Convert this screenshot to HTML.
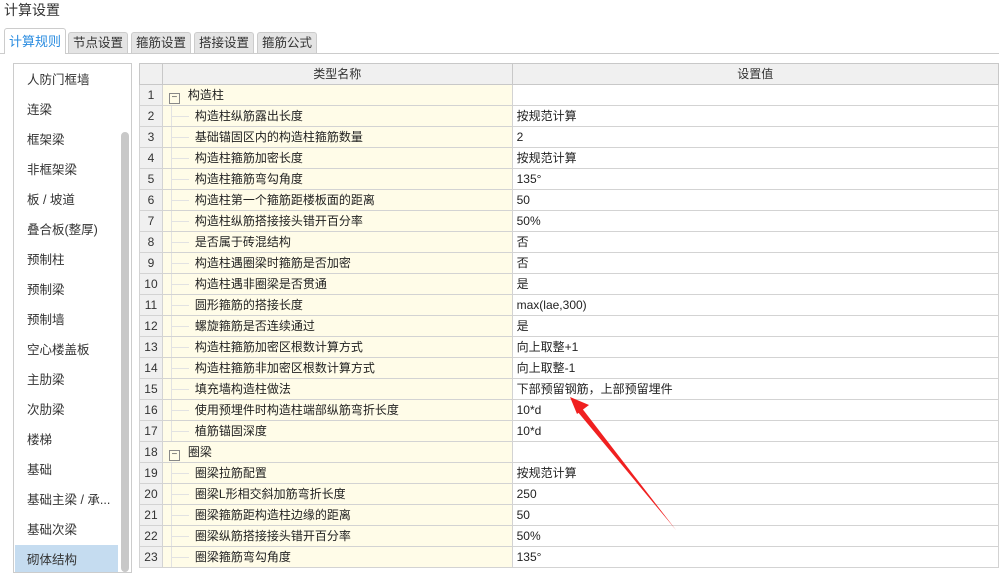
<!DOCTYPE html>
<html><head><meta charset="utf-8"><style>
*{margin:0;padding:0;box-sizing:border-box}
body{width:999px;height:565px;overflow:hidden;background:#fff;font-family:"Liberation Sans","Noto Sans CJK SC",sans-serif;font-size:12px;color:#222;position:relative}
.abs{position:absolute}
.title{left:4px;top:0;font-size:14px;color:#333}
.tab{top:32px;height:21px;background:#e4e4e4;border:1px solid #ccc;border-bottom:none;border-radius:3px 3px 0 0;font-size:12.5px;color:#333;text-align:center;line-height:20px}
.tab.act{top:28px;height:26px;background:#fff;color:#2a8ce0;line-height:26px;font-size:13px}
.line{left:0;top:53px;width:999px;height:1px;background:#ccc}
.left{left:13px;top:63px;width:119px;height:510px;border:1px solid #ccc;overflow:hidden}
.li{position:absolute;left:13px;font-size:12.5px;color:#333}
.sel{position:absolute;left:1px;width:103px;top:481px;height:30px;background:#c5dcf0}
.sb{left:121px;top:132px;width:8px;height:440px;background:#c8c8c8;border-radius:4px}
table{position:absolute;left:139px;top:63px;border-collapse:collapse;table-layout:fixed}
tr{height:21px}
td{height:21px;line-height:19px;border:1px solid #d3d3d3;padding:0 0 0 4px;white-space:nowrap;overflow:hidden;font-size:12px;color:#222}
th{height:21px;line-height:19px;border:1px solid #c8c8c8;background:#f0f0f0;font-weight:normal;font-size:12px;color:#333}
td.n{background:#f0f0f0;text-align:center;padding:0;color:#333}
td.k{background:#fffce8;position:relative}
td.k.c{padding-left:32px}
td.k.c:before{content:"";position:absolute;left:8px;top:10px;width:18px;height:1px;background:#e2e2e2}
td.k.c:after{content:"";position:absolute;left:8px;top:0;width:1px;height:21px;background:#e2e2e2}
.box{display:inline-block;width:11px;height:11px;border:1px solid #888;font-size:10px;line-height:8px;text-align:center;margin:0 8px 0 2px;vertical-align:-1px;color:#555}
</style></head><body>
<div class="abs title">计算设置</div>
<div class="abs line"></div>
<div class="abs tab act" style="left:4px;width:62px">计算规则</div>
<div class="abs tab" style="left:68px;width:60px">节点设置</div>
<div class="abs tab" style="left:131px;width:60px">箍筋设置</div>
<div class="abs tab" style="left:194px;width:60px">搭接设置</div>
<div class="abs tab" style="left:257px;width:60px">箍筋公式</div>
<div class="abs left">
<div class="sel"></div>
<div class="li" style="top:5px">人防门框墙</div>
<div class="li" style="top:35px">连梁</div>
<div class="li" style="top:65px">框架梁</div>
<div class="li" style="top:95px">非框架梁</div>
<div class="li" style="top:125px">板 / 坡道</div>
<div class="li" style="top:155px">叠合板(整厚)</div>
<div class="li" style="top:185px">预制柱</div>
<div class="li" style="top:215px">预制梁</div>
<div class="li" style="top:245px">预制墙</div>
<div class="li" style="top:275px">空心楼盖板</div>
<div class="li" style="top:305px">主肋梁</div>
<div class="li" style="top:335px">次肋梁</div>
<div class="li" style="top:365px">楼梯</div>
<div class="li" style="top:395px">基础</div>
<div class="li" style="top:425px">基础主梁 / 承...</div>
<div class="li" style="top:455px">基础次梁</div>
<div class="li" style="top:485px">砌体结构</div>
</div>
<div class="abs sb"></div>
<table>
<colgroup><col style="width:23px"><col style="width:351px"><col style="width:490px"></colgroup>
<tr><th></th><th>类型名称</th><th>设置值</th></tr>
<tr><td class="n">1</td><td class="k"><span class="box">−</span>构造柱</td><td></td></tr>
<tr><td class="n">2</td><td class="k c">构造柱纵筋露出长度</td><td>按规范计算</td></tr>
<tr><td class="n">3</td><td class="k c">基础锚固区内的构造柱箍筋数量</td><td>2</td></tr>
<tr><td class="n">4</td><td class="k c">构造柱箍筋加密长度</td><td>按规范计算</td></tr>
<tr><td class="n">5</td><td class="k c">构造柱箍筋弯勾角度</td><td>135°</td></tr>
<tr><td class="n">6</td><td class="k c">构造柱第一个箍筋距楼板面的距离</td><td>50</td></tr>
<tr><td class="n">7</td><td class="k c">构造柱纵筋搭接接头错开百分率</td><td>50%</td></tr>
<tr><td class="n">8</td><td class="k c">是否属于砖混结构</td><td>否</td></tr>
<tr><td class="n">9</td><td class="k c">构造柱遇圈梁时箍筋是否加密</td><td>否</td></tr>
<tr><td class="n">10</td><td class="k c">构造柱遇非圈梁是否贯通</td><td>是</td></tr>
<tr><td class="n">11</td><td class="k c">圆形箍筋的搭接长度</td><td>max(lae,300)</td></tr>
<tr><td class="n">12</td><td class="k c">螺旋箍筋是否连续通过</td><td>是</td></tr>
<tr><td class="n">13</td><td class="k c">构造柱箍筋加密区根数计算方式</td><td>向上取整+1</td></tr>
<tr><td class="n">14</td><td class="k c">构造柱箍筋非加密区根数计算方式</td><td>向上取整-1</td></tr>
<tr><td class="n">15</td><td class="k c">填充墙构造柱做法</td><td>下部预留钢筋，上部预留埋件</td></tr>
<tr><td class="n">16</td><td class="k c">使用预埋件时构造柱端部纵筋弯折长度</td><td>10*d</td></tr>
<tr><td class="n">17</td><td class="k c">植筋锚固深度</td><td>10*d</td></tr>
<tr><td class="n">18</td><td class="k"><span class="box">−</span>圈梁</td><td></td></tr>
<tr><td class="n">19</td><td class="k c">圈梁拉筋配置</td><td>按规范计算</td></tr>
<tr><td class="n">20</td><td class="k c">圈梁L形相交斜加筋弯折长度</td><td>250</td></tr>
<tr><td class="n">21</td><td class="k c">圈梁箍筋距构造柱边缘的距离</td><td>50</td></tr>
<tr><td class="n">22</td><td class="k c">圈梁纵筋搭接接头错开百分率</td><td>50%</td></tr>
<tr><td class="n">23</td><td class="k c">圈梁箍筋弯勾角度</td><td>135°</td></tr>
</table>
<svg class="abs" style="left:0;top:0" width="999" height="565">
<polygon points="676,530 581,407 577,411" fill="#f02020"/>
<polygon points="570,397 589,405 577,414" fill="#f02020"/>
</svg>
</body></html>
